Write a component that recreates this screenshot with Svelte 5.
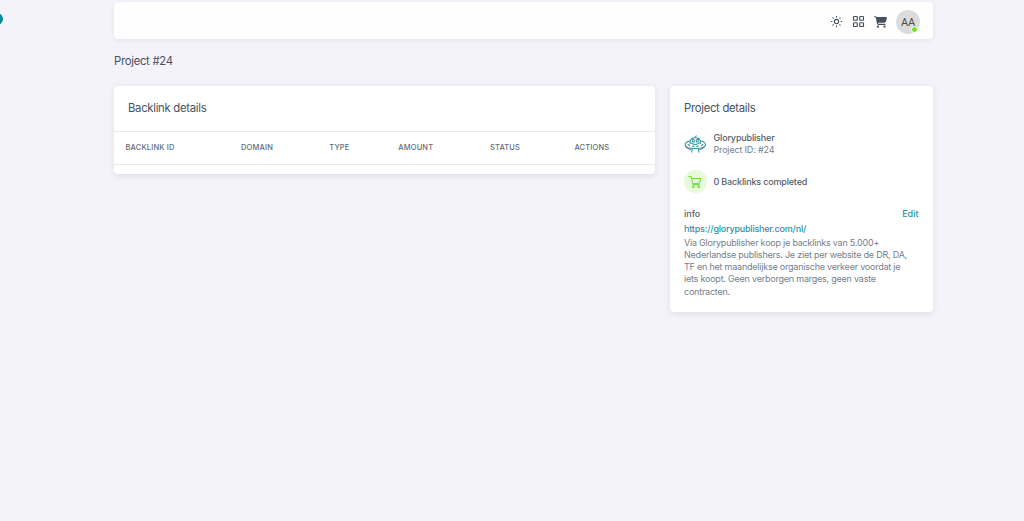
<script>
  const columns = [
    { label: 'Backlink ID', width: 115.5 },
    { label: 'Domain', width: 88.2 },
    { label: 'Type', width: 69 },
    { label: 'Amount', width: 91.8 },
    { label: 'Status', width: 84.4 },
    { label: 'Actions', width: 80.6 }
  ];
  const lines = [
    'Via Glorypublisher koop je backlinks van 5.000+',
    'Nederlandse publishers. Je ziet per website de DR, DA,',
    'TF en het maandelijkse organische verkeer voordat je',
    'iets koopt. Geen verborgen marges, geen vaste',
    'contracten.'
  ];
</script>

<button class="menu-toggle" aria-label="Menu"></button>
<div class="page">
  <header class="navbar">
    <svg class="sun" viewBox="0 0 24 24" fill="none" stroke="currentColor" stroke-width="2" stroke-linecap="round"><circle cx="12" cy="12" r="4" /><path d="M12 2.500v1M12 20.500v1M2.500 12h1M20.500 12h1M5.300 5.300l.7.7M18 18l.7.7M18.700 5.300l-.7.7M6 18l-.7.7" /></svg>
    <svg class="grid" viewBox="0 0 24 24" fill="none" stroke="currentColor" stroke-width="1.800"><rect x="4" y="4" width="6" height="6" rx="1" /><rect x="14" y="4" width="6" height="6" rx="1" /><rect x="4" y="14" width="6" height="6" rx="1" /><rect x="14" y="14" width="6" height="6" rx="1" /></svg>
    <svg class="cart" viewBox="0 0 576 512" fill="currentColor"><path d="M0 24C0 10.700 10.700 0 24 0h45.500c22 0 41.500 12.800 50.600 32h411c26.300 0 45.500 25 38.600 50.400l-41 152.300c-8.500 31.400-37 53.300-69.500 53.300H170.700l5.400 28.500c2.200 11.300 12.100 19.500 23.600 19.500H488c13.300 0 24 10.700 24 24s-10.700 24-24 24H199.700c-34.600 0-64.300-24.600-70.700-58.500L77.400 54.500C76.700 50.700 73.400 48 69.500 48H24C10.700 48 0 37.300 0 24z" /><circle cx="176" cy="464" r="48" /><circle cx="464" cy="464" r="48" /></svg>
    <div class="avatar">AA<i></i></div>
  </header>

  <h4>Project #24</h4>

  <main>
    <section class="card backlinks">
      <h5>Backlink details</h5>
      <div class="thead">
        {#each columns as c}
          <div style="width:{c.width}px"><span>{c.label}</span></div>
        {/each}
      </div>
    </section>

    <aside class="card details">
      <h5>Project details</h5>
      <div class="project">
        <svg viewBox="0 0 44 44" fill="none" stroke="#3592a2" stroke-width="2" stroke-linecap="round">
          <path d="M12 20v-5c1-4 5-6 10-6s9 2 10 6v5M14 19c4 4 12 4 16 0" />
          <path d="M12 15C6 16 2 19 2 22c0 5 9 8 20 8s20-3 20-8c0-3-4-6-10-7" />
          <path d="M4 26c2 4 5 5 9 6M40 26c-2 4-5 5-9 6" />
          <path d="M16 13q2-2 4 0v4h-3zM24 13q3-2 5 0l-2 4h-3zM8 22l3 2M17 25l3 1M25 26l3-1M34 24l3-2M16 31l-1 6M28 31l1 6M22 8l2-3" />
        </svg>
        <div><strong>Glorypublisher</strong><p>Project ID: #24</p></div>
      </div>
      <div class="completed">
        <div class="badge">
          <svg viewBox="0 0 24 24" fill="none" stroke="#72df40" stroke-width="1.900" stroke-linecap="round" stroke-linejoin="round"><path d="M1.500 2.500h3.500l4 14h10M6 6H22l-2.500 8-10.500 1" /><circle cx="9" cy="20" r="1.500" /><circle cx="18.500" cy="20" r="1.500" /></svg>
        </div>
        <strong>0 Backlinks completed</strong>
      </div>
      <div class="info"><strong>info</strong><a href="#edit">Edit</a></div>
      <a class="url" href="#site">https://glorypublisher.com/nl/</a>
      <div class="description">
        {#each lines as line}<p>{line}</p>{/each}
      </div>
    </aside>
  </main>
</div>

<style>
  :global(body) { background: #f4f3f9; }
  :global(#app) { min-height: 521px; font-family: Inter, "Liberation Sans", sans-serif; font-size: 9px; line-height: 12.3px; color: #75808b; }
  .page { width: 819px; margin-left: 114px; padding-top: 2px; }
  .menu-toggle { position: absolute; left: -9px; top: 13px; width: 12px; height: 12px; padding: 0; border: 0; border-radius: 50%; background: #078c9c; }
  .navbar { height: 37px; box-sizing: border-box; display: flex; align-items: center; justify-content: flex-end; padding: 1px 13px 0 0; background: #fefeff; border-radius: 4px; box-shadow: 0 1px 5px #2f2b3d14; color: #44505e; }
  .sun { width: 13px; height: 13px; margin-right: 8.500px; }
  .grid { width: 15px; height: 15px; margin-right: 8px; }
  .cart { width: 13px; height: 12px; margin-right: 9px; margin-top: 2px; }
  .avatar { position: relative; width: 24px; height: 24px; margin-top: 1px; line-height: 25px; text-align: center; border-radius: 50%; background: #dcdcdc; color: #4b4b4b; font-family: Roboto, sans-serif; font-size: 11px; letter-spacing: -.2px; }
  .avatar i { position: absolute; right: 2px; bottom: 1px; width: 5px; height: 5px; border-radius: 50%; background: #72df2e; border: 1px solid #fff; }
  h4, h5, p { margin: 0; font-weight: 400; }
  h4, h5 { font-size: 11.300px; line-height: 16px; color: #45515e; font-weight: 430; letter-spacing: -.29px; white-space: nowrap; }
  h4 { margin-top: 14px; }
  main { display: flex; align-items: flex-start; gap: 15px; margin-top: 17px; }
  .card { background: #fff; border-radius: 4px; box-shadow: 0 1.500px 6px #2f2b3d18; box-sizing: border-box; }
  .backlinks { width: 541px; height: 88px; padding-top: 14px; }
  .backlinks h5 { padding-left: 14px; }
  .thead { display: flex; align-items: center; box-sizing: border-box; height: 34px; margin-top: 15px; padding-left: 11.500px; border: solid #e9e9ec; border-width: 1px 0; text-transform: uppercase; font-size: 7.500px; letter-spacing: .18px; font-weight: 500; color: #626d78; white-space: nowrap; }
  .details { width: 263px; height: 225.500px; padding: 14px 14.500px 0 14px; }
  strong { color: #53606d; font-weight: 550; letter-spacing: -.17px; }
  .project { display: flex; align-items: center; gap: 7px; height: 25px; margin-top: 15.500px; }
  .project p { letter-spacing: -.17px; }
  .project svg { width: 22.500px; height: 23px; }
  .completed { display: flex; align-items: center; gap: 7px; margin-top: 13.500px; height: 23px; line-height: 14px; }
  .completed strong { padding-top: 1px; }
  .badge { width: 22.500px; height: 22.500px; border-radius: 50%; background: #e7fbdc; display: flex; align-items: center; justify-content: center; }
  .badge svg { width: 14px; height: 14px; }
  .info { display: flex; justify-content: space-between; margin-top: 14px; line-height: 14px; }
  .info strong { letter-spacing: 0; }
  a { color: #2298a5; text-decoration: none; font-weight: 450; }
  .info a { font-weight: 500; }
  .url { display: block; line-height: 14px; margin-top: .5px; letter-spacing: -.21px; }
  .description { margin-top: 1px; white-space: nowrap; letter-spacing: -.22px; }
</style>
